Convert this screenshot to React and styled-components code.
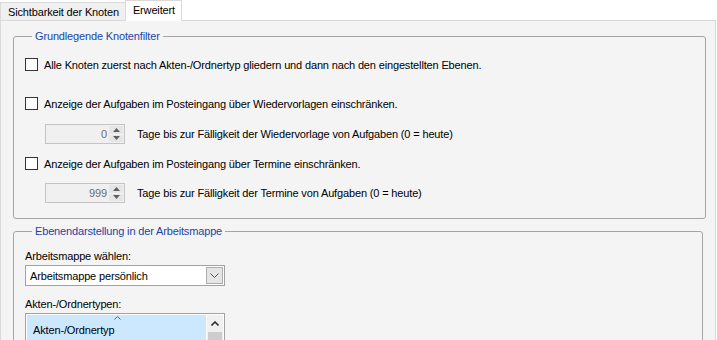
import styled, { createGlobalStyle } from 'styled-components'

const GlobalStyle = createGlobalStyle`
  html, body {
    margin: 0;
    padding: 0;
    background: #fff;
  }
  body {
    font-family: "Liberation Sans", Arial, sans-serif;
    font-size: 11px;
    letter-spacing: -0.15px;
    color: #000;
  }
`

const Window = styled.div`
  width: 717px;
  height: 340px;
  overflow: hidden;
  display: flex;
  flex-direction: column;
`

const TabStrip = styled.div`
  display: flex;
  align-items: flex-end;
  height: 20px;
  position: relative;
  z-index: 1;
`

const Tab = styled.div`
  box-sizing: border-box;
  display: flex;
  align-items: center;
  border: 1px solid #d9d9d9;
  border-bottom: none;
  white-space: nowrap;
  ${(p) =>
    p.$active
      ? `
    height: 21px;
    margin-bottom: -1px;
    margin-left: -1px;
    padding: 0 6px 2px 7px;
    background: #fff;
  `
      : `
    height: 18px;
    padding: 0 6px 0 7px;
    background: #f0f0f0;
  `}
`

const Panel = styled.div`
  box-sizing: border-box;
  width: 716px;
  flex: 1;
  border: 1px solid #d9d9d9;
  background: #f4f4f4;
  padding: 0 0 0 12px;
`

const Group = styled.fieldset`
  box-sizing: border-box;
  width: ${(p) => p.$width}px;
  margin: ${(p) => p.$top}px 0 0 0;
  padding: 0 0 ${(p) => p.$bottom}px 11px;
  border: 1px solid #a5a5a5;
  border-radius: 3px;
  min-width: 0;
`

const Legend = styled.legend`
  margin-left: 7px;
  padding: 0 3px;
  line-height: 13px;
  color: #1b44a8;
`

const Content = styled.div`
  display: flex;
  flex-direction: column;
  padding-top: ${(p) => p.$top}px;
`

const CheckRow = styled.label`
  display: flex;
  align-items: center;
  gap: 6px;
  height: 13px;
  margin-top: ${(p) => p.$gap || 0}px;
`

const Box = styled.span`
  box-sizing: border-box;
  width: 13px;
  height: 13px;
  border: 1px solid #333;
  background: #fff;
  flex: none;
`

const SpinRow = styled.div`
  display: flex;
  align-items: center;
  gap: 12px;
  height: 20px;
  margin-top: ${(p) => p.$gap}px;
  padding-left: 20px;
`

const Spinner = styled.div`
  box-sizing: border-box;
  width: 80px;
  height: 20px;
  border: 1px solid #c4c4c4;
  background: #f0f0f0;
  display: flex;
  align-items: stretch;
  padding: 1px;
`

const SpinValue = styled.span`
  flex: 1;
  display: flex;
  align-items: center;
  justify-content: flex-end;
  padding-right: 2px;
  color: #6d6d6d;
`

const SpinButtons = styled.div`
  width: 14px;
  display: flex;
  flex-direction: column;
  background: #e6e6e6;
`

const SpinButton = styled.div`
  flex: 1;
  display: flex;
  align-items: center;
  justify-content: center;
  & + & {
    border-top: 1px solid #f4f4f4;
  }
`

const FieldLabel = styled.div`
  line-height: 13px;
  margin-top: ${(p) => p.$gap}px;
`

const Combo = styled.div`
  box-sizing: border-box;
  width: 200px;
  height: 21px;
  margin-top: 2px;
  border: 1px solid #a2a2a2;
  background: #fff;
  display: flex;
  align-items: center;
  padding: 1px;
`

const ComboText = styled.span`
  flex: 1;
  padding-left: 3px;
`

const DropButton = styled.span`
  box-sizing: border-box;
  width: 17px;
  height: 17px;
  border: 1px solid #adadad;
  background: #e5e5e5;
  display: flex;
  align-items: center;
  justify-content: center;
`

const List = styled.div`
  position: relative;
  box-sizing: border-box;
  width: 200px;
  height: 40px;
  margin-top: 2px;
  border: 1px solid #a2a2a2;
  border-bottom: none;
  background: #fff;
  display: flex;
  padding: 1px 1px 0 1px;
`

const ListItem = styled.div`
  flex: 1;
  height: 30px;
  background: #cce8ff;
  display: flex;
  align-items: center;
  padding-left: 6px;
  margin-right: 1px;
`

const SortGlyph = styled.svg`
  position: absolute;
  left: 88px;
  top: 2px;
`

const ScrollBar = styled.div`
  width: 16px;
  background: #f0f0f0;
  display: flex;
  flex-direction: column;
`

const ScrollArrow = styled.div`
  height: 17px;
  display: flex;
  align-items: center;
  justify-content: center;
`

const Thumb = styled.div`
  margin: 0 1px;
  height: 20px;
  background: #cdcdcd;
`

const Up = () => (
  <svg width="7" height="4" viewBox="0 0 7 4">
    <polygon points="3.5,0 7,4 0,4" fill="#606060" />
  </svg>
)

const Down = () => (
  <svg width="7" height="4" viewBox="0 0 7 4">
    <polygon points="0,0 7,0 3.5,4" fill="#606060" />
  </svg>
)

const NumberSpin = ({ value }) => (
  <Spinner>
    <SpinValue>{value}</SpinValue>
    <SpinButtons>
      <SpinButton><Up /></SpinButton>
      <SpinButton><Down /></SpinButton>
    </SpinButtons>
  </Spinner>
)

const App = () => {
  return (
    <>
      <GlobalStyle />
      <Window>
        <TabStrip>
          <Tab>Sichtbarkeit der Knoten</Tab>
          <Tab $active>Erweitert</Tab>
        </TabStrip>
        <Panel>
          <Group $width={693} $top={9} $bottom={15}>
            <Legend>Grundlegende Knotenfilter</Legend>
            <Content $top={15}>
              <CheckRow>
                <Box />
                Alle Knoten zuerst nach Akten-/Ordnertyp gliedern und dann nach den eingestellten Ebenen.
              </CheckRow>
              <CheckRow $gap={26}>
                <Box />
                Anzeige der Aufgaben im Posteingang über Wiedervorlagen einschränken.
              </CheckRow>
              <SpinRow $gap={14}>
                <NumberSpin value="0" />
                Tage bis zur Fälligkeit der Wiedervorlage von Aufgaben (0 = heute)
              </SpinRow>
              <CheckRow $gap={13}>
                <Box />
                Anzeige der Aufgaben im Posteingang über Termine einschränken.
              </CheckRow>
              <SpinRow $gap={13}>
                <NumberSpin value="999" />
                Tage bis zur Fälligkeit der Termine von Aufgaben (0 = heute)
              </SpinRow>
            </Content>
          </Group>
          <Group $width={690} $top={6} $bottom={0}>
            <Legend>Ebenendarstellung in der Arbeitsmappe</Legend>
            <Content $top={0}>
              <FieldLabel $gap={12}>Arbeitsmappe wählen:</FieldLabel>
              <Combo>
                <ComboText>Arbeitsmappe persönlich</ComboText>
                <DropButton>
                  <svg width="9" height="5" viewBox="0 0 9 5">
                    <polyline points="0.5,0.5 4.5,4.5 8.5,0.5" fill="none" stroke="#555" strokeWidth="1" />
                  </svg>
                </DropButton>
              </Combo>
              <FieldLabel $gap={12}>Akten-/Ordnertypen:</FieldLabel>
              <List>
                <ListItem>Akten-/Ordnertyp</ListItem>
                <SortGlyph width="7" height="4" viewBox="0 0 7 4">
                  <polyline points="0.5,3.5 3.5,0.5 6.5,3.5" fill="none" stroke="#666" strokeWidth="1" />
                </SortGlyph>
                <ScrollBar>
                  <ScrollArrow>
                    <svg width="8" height="5" viewBox="0 0 8 5">
                      <polyline points="0.5,4.5 4,1 7.5,4.5" fill="none" stroke="#333" strokeWidth="1.6" />
                    </svg>
                  </ScrollArrow>
                  <Thumb />
                </ScrollBar>
              </List>
            </Content>
          </Group>
        </Panel>
      </Window>
    </>
  )
}

export default App
